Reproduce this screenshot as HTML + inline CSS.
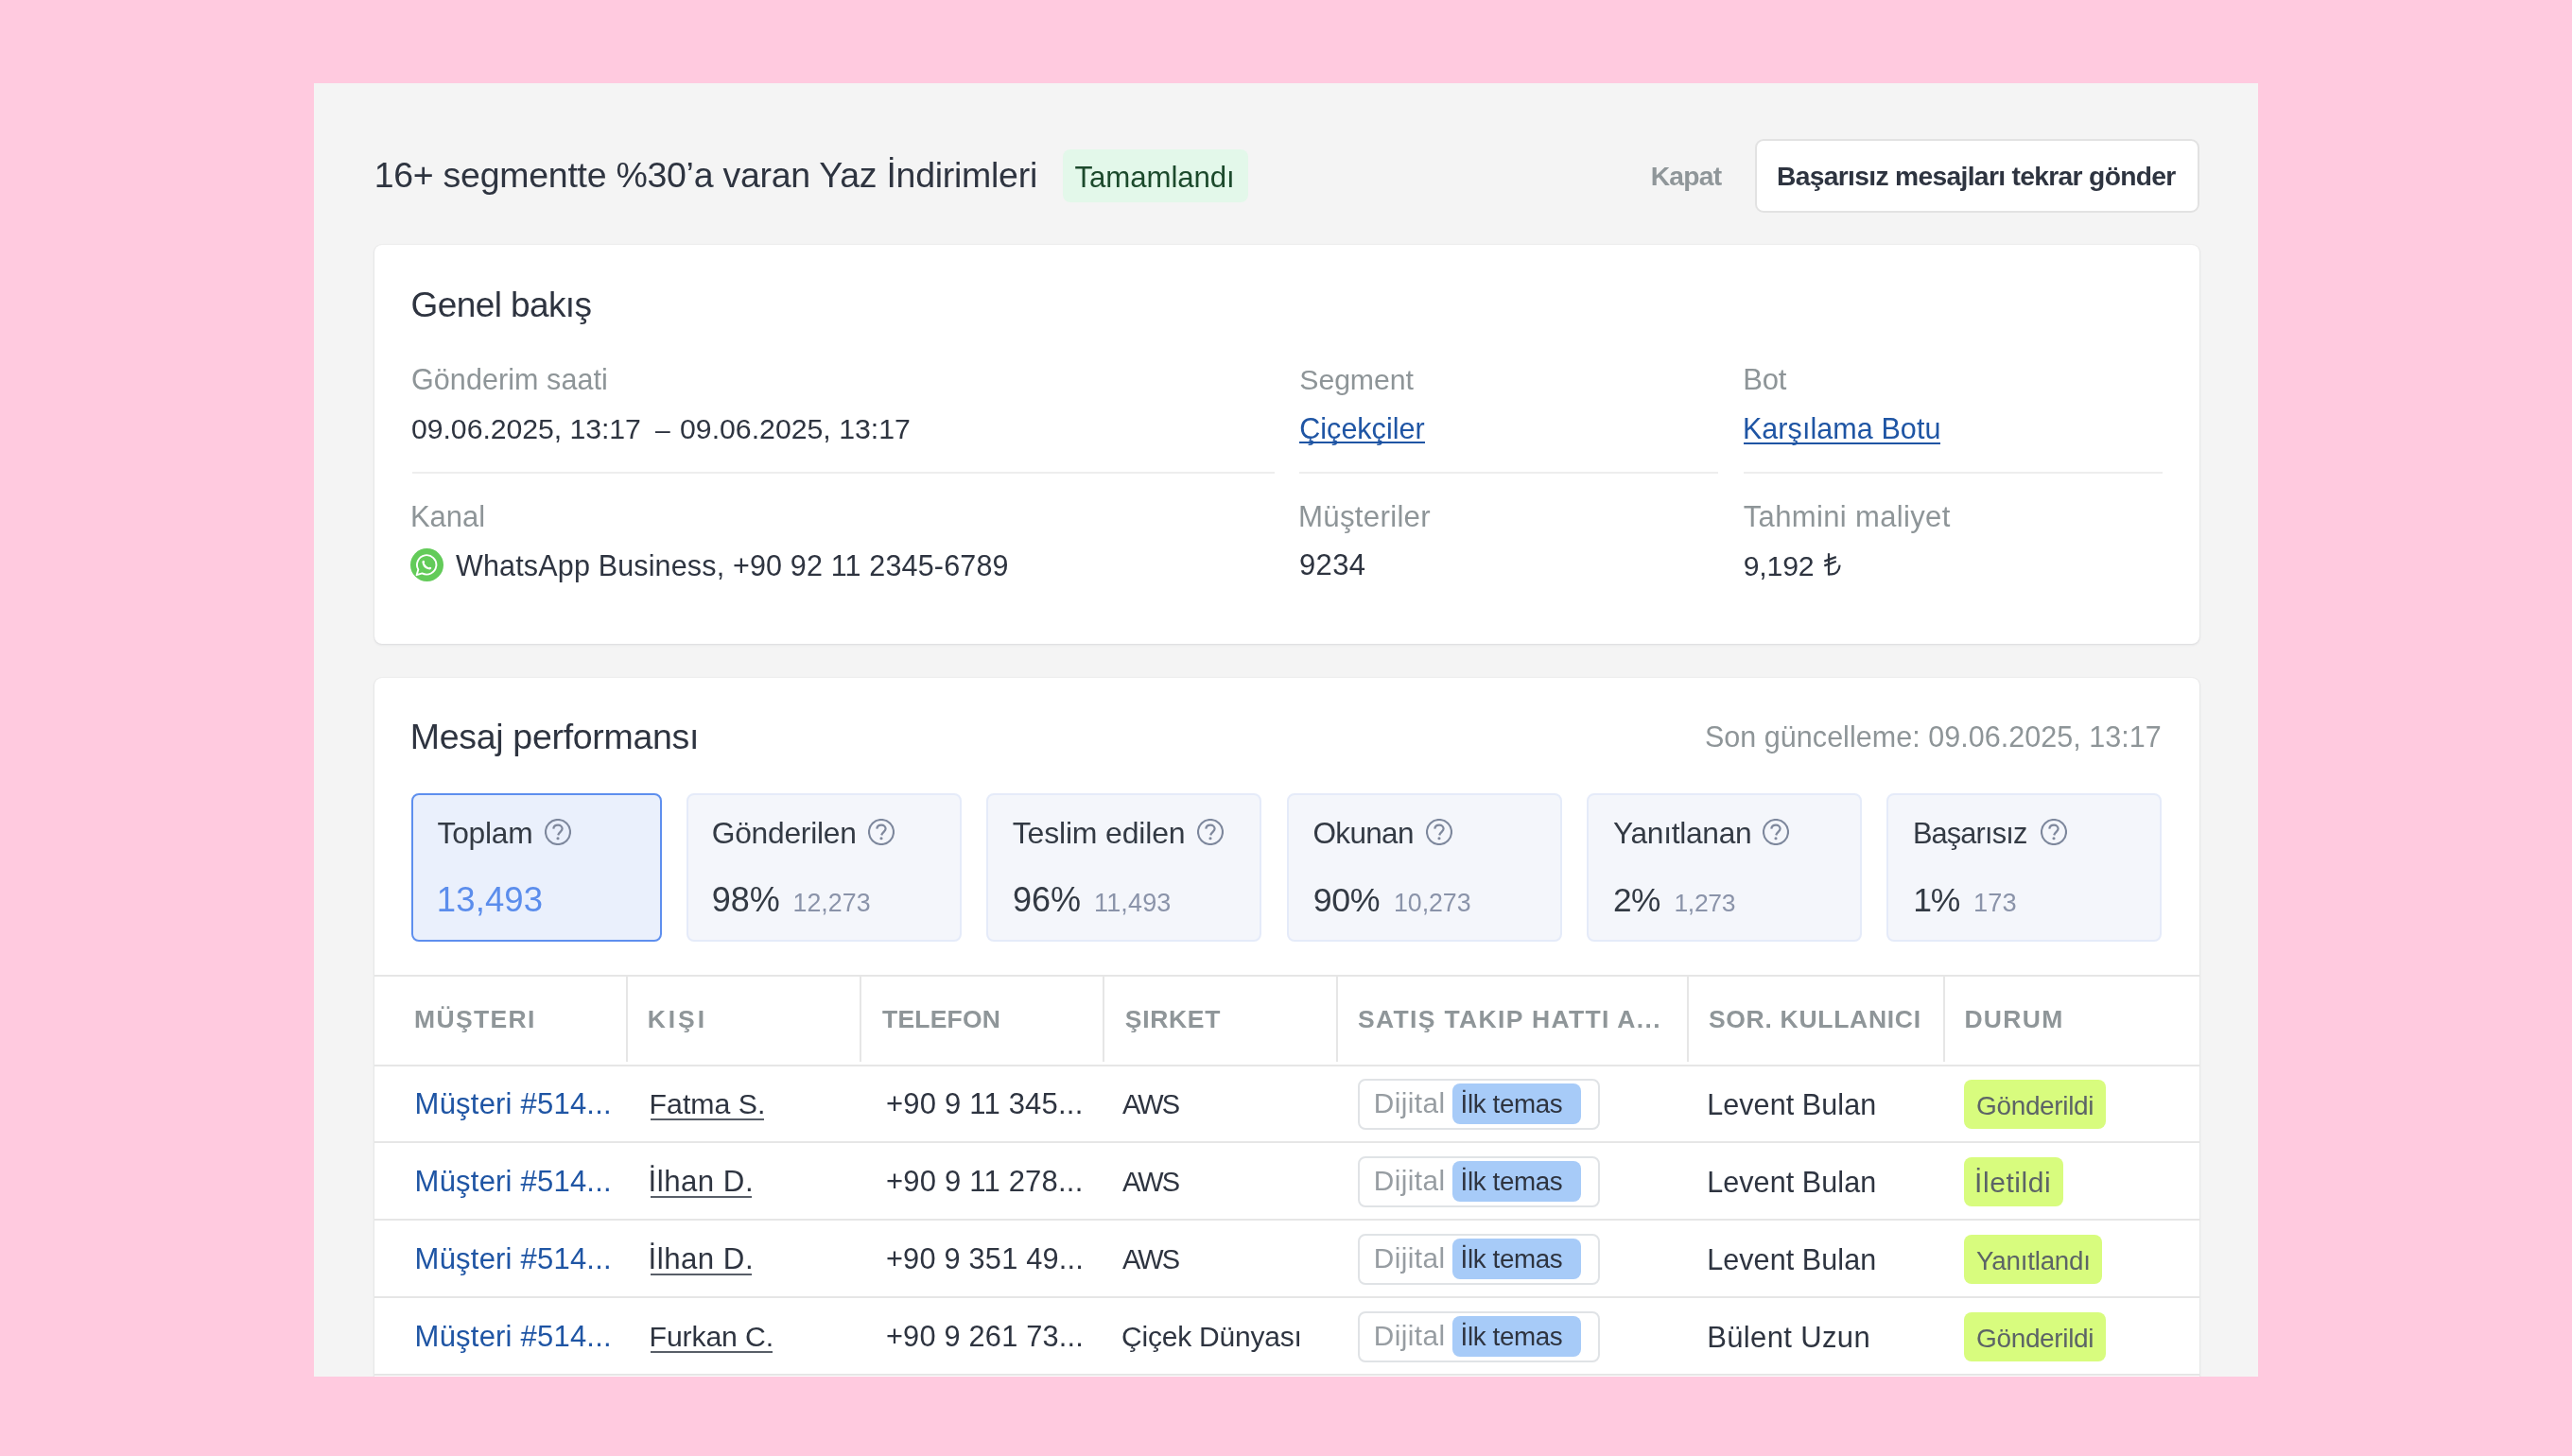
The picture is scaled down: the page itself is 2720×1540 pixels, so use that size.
<!DOCTYPE html>
<html><head><meta charset="utf-8"><title>Mesaj performansı</title>
<style>
html,body{margin:0;padding:0}
body{width:2720px;height:1540px;background:#FFCADF;position:relative;overflow:hidden;font-family:"Liberation Sans",sans-serif}
#panel{will-change:transform;position:absolute;left:332px;top:88px;width:2056px;height:1368px;background:#F4F4F4;overflow:hidden}
#panel>div,#panel>svg{position:absolute}
.t{white-space:nowrap;line-height:60px;height:60px}
</style></head><body>
<div id="panel">
<div style='left:792.00px;top:70.00px;width:196.00px;height:56.00px;background:#E3F8EA;border-radius:8px'></div>
<div style='left:1524.00px;top:59.00px;width:470.00px;height:78.00px;background:#fff;border:2px solid #E2E2E2;border-radius:9px;box-sizing:border-box'></div>
<div style='left:64.00px;top:171.00px;width:1930.00px;height:422.00px;background:#fff;border-radius:8px;box-shadow:0 1px 3px rgba(20,30,50,.11),0 0 2px rgba(0,0,0,.07)'></div>
<div style='left:104.00px;top:411.00px;width:912.00px;height:2.00px;background:#EEEEEE'></div>
<div style='left:1042.00px;top:411.00px;width:443.00px;height:2.00px;background:#EEEEEE'></div>
<div style='left:1512.00px;top:411.00px;width:443.00px;height:2.00px;background:#EEEEEE'></div>
<div style='left:1042.00px;top:379.00px;width:132.50px;height:2.00px;background:#1F55A4'></div>
<div style='left:1512.00px;top:379.50px;width:208.00px;height:2.00px;background:#1F55A4'></div>
<div style='left:64.00px;top:628.50px;width:1930.00px;height:843.50px;background:#fff;border-radius:8px;box-shadow:0 1px 3px rgba(20,30,50,.11),0 0 2px rgba(0,0,0,.07)'></div>
<div style='left:103.00px;top:751.00px;width:265.00px;height:157.00px;background:#EAF0FC;border:2px solid #5E8FEE;border-radius:8px;box-sizing:border-box'></div>
<div style='left:394.00px;top:751.00px;width:291.00px;height:157.00px;background:#F4F6FB;border:2px solid #E5EBF9;border-radius:8px;box-sizing:border-box'></div>
<div style='left:711.00px;top:751.00px;width:291.00px;height:157.00px;background:#F4F6FB;border:2px solid #E5EBF9;border-radius:8px;box-sizing:border-box'></div>
<div style='left:1029.00px;top:751.00px;width:291.00px;height:157.00px;background:#F4F6FB;border:2px solid #E5EBF9;border-radius:8px;box-sizing:border-box'></div>
<div style='left:1346.00px;top:751.00px;width:291.00px;height:157.00px;background:#F4F6FB;border:2px solid #E5EBF9;border-radius:8px;box-sizing:border-box'></div>
<div style='left:1663.00px;top:751.00px;width:291.00px;height:157.00px;background:#F4F6FB;border:2px solid #E5EBF9;border-radius:8px;box-sizing:border-box'></div>
<div style='left:64.00px;top:943.00px;width:1930.00px;height:2.00px;background:#E6E6E6'></div>
<div style='left:64.00px;top:1037.50px;width:1930.00px;height:2.00px;background:#E6E6E6'></div>
<div style='left:330.00px;top:944.00px;width:2.00px;height:91.00px;background:#E6E6E6'></div>
<div style='left:577.00px;top:944.00px;width:2.00px;height:91.00px;background:#E6E6E6'></div>
<div style='left:834.00px;top:944.00px;width:2.00px;height:91.00px;background:#E6E6E6'></div>
<div style='left:1081.00px;top:944.00px;width:2.00px;height:91.00px;background:#E6E6E6'></div>
<div style='left:1451.50px;top:944.00px;width:2.00px;height:91.00px;background:#E6E6E6'></div>
<div style='left:1723.00px;top:944.00px;width:2.00px;height:91.00px;background:#E6E6E6'></div>
<div style='left:64.00px;top:1119.00px;width:1930.00px;height:2.00px;background:#E6E6E6'></div>
<div style='left:64.00px;top:1201.00px;width:1930.00px;height:2.00px;background:#E6E6E6'></div>
<div style='left:64.00px;top:1283.00px;width:1930.00px;height:2.00px;background:#E6E6E6'></div>
<div style='left:64.00px;top:1365.00px;width:1930.00px;height:2.00px;background:#E6E6E6'></div>
<div style='left:356.00px;top:1094.50px;width:120.00px;height:2.00px;background:#585E68'></div>
<div style='left:1103.50px;top:1052.50px;width:256.00px;height:54.00px;background:#fff;border:2px solid #E0E3E6;border-radius:8px;box-sizing:border-box'></div>
<div style='left:1204.00px;top:1058.00px;width:136.00px;height:42.50px;background:#A7CBF8;border-radius:8px'></div>
<div style='left:1745.00px;top:1054.30px;width:150.00px;height:52.00px;background:#D8FC7E;border-radius:8px'></div>
<div style='left:356.00px;top:1176.50px;width:107.10px;height:2.00px;background:#585E68'></div>
<div style='left:1103.50px;top:1134.50px;width:256.00px;height:54.00px;background:#fff;border:2px solid #E0E3E6;border-radius:8px;box-sizing:border-box'></div>
<div style='left:1204.00px;top:1140.00px;width:136.00px;height:42.50px;background:#A7CBF8;border-radius:8px'></div>
<div style='left:1745.00px;top:1136.30px;width:105.00px;height:52.00px;background:#D8FC7E;border-radius:8px'></div>
<div style='left:356.00px;top:1258.50px;width:107.10px;height:2.00px;background:#585E68'></div>
<div style='left:1103.50px;top:1216.50px;width:256.00px;height:54.00px;background:#fff;border:2px solid #E0E3E6;border-radius:8px;box-sizing:border-box'></div>
<div style='left:1204.00px;top:1222.00px;width:136.00px;height:42.50px;background:#A7CBF8;border-radius:8px'></div>
<div style='left:1745.00px;top:1218.30px;width:146.00px;height:52.00px;background:#D8FC7E;border-radius:8px'></div>
<div style='left:356.00px;top:1340.50px;width:128.90px;height:2.00px;background:#585E68'></div>
<div style='left:1103.50px;top:1298.50px;width:256.00px;height:54.00px;background:#fff;border:2px solid #E0E3E6;border-radius:8px;box-sizing:border-box'></div>
<div style='left:1204.00px;top:1304.00px;width:136.00px;height:42.50px;background:#A7CBF8;border-radius:8px'></div>
<div style='left:1745.00px;top:1300.30px;width:150.00px;height:52.00px;background:#D8FC7E;border-radius:8px'></div>
<svg style='left:243.70px;top:778.00px' width='28' height='28' viewBox='0 0 28 28'><circle cx='14' cy='14' r='13' fill='none' stroke='#7D879C' stroke-width='2.15'/><path d='M9.3 10.6 C9.6 7.6 12 6.6 14.1 6.6 C16.6 6.6 18.6 8.3 18.6 10.6 C18.6 13.3 15.2 14.1 14.2 17.3' fill='none' stroke='#7F889C' stroke-width='2.2' stroke-linecap='butt'/><circle cx='14' cy='20.8' r='1.55' fill='#7F889C'/></svg>
<svg style='left:586.40px;top:778.00px' width='28' height='28' viewBox='0 0 28 28'><circle cx='14' cy='14' r='13' fill='none' stroke='#7D879C' stroke-width='2.15'/><path d='M9.3 10.6 C9.6 7.6 12 6.6 14.1 6.6 C16.6 6.6 18.6 8.3 18.6 10.6 C18.6 13.3 15.2 14.1 14.2 17.3' fill='none' stroke='#7F889C' stroke-width='2.2' stroke-linecap='butt'/><circle cx='14' cy='20.8' r='1.55' fill='#7F889C'/></svg>
<svg style='left:933.70px;top:778.00px' width='28' height='28' viewBox='0 0 28 28'><circle cx='14' cy='14' r='13' fill='none' stroke='#7D879C' stroke-width='2.15'/><path d='M9.3 10.6 C9.6 7.6 12 6.6 14.1 6.6 C16.6 6.6 18.6 8.3 18.6 10.6 C18.6 13.3 15.2 14.1 14.2 17.3' fill='none' stroke='#7F889C' stroke-width='2.2' stroke-linecap='butt'/><circle cx='14' cy='20.8' r='1.55' fill='#7F889C'/></svg>
<svg style='left:1176.00px;top:778.00px' width='28' height='28' viewBox='0 0 28 28'><circle cx='14' cy='14' r='13' fill='none' stroke='#7D879C' stroke-width='2.15'/><path d='M9.3 10.6 C9.6 7.6 12 6.6 14.1 6.6 C16.6 6.6 18.6 8.3 18.6 10.6 C18.6 13.3 15.2 14.1 14.2 17.3' fill='none' stroke='#7F889C' stroke-width='2.2' stroke-linecap='butt'/><circle cx='14' cy='20.8' r='1.55' fill='#7F889C'/></svg>
<svg style='left:1532.40px;top:778.00px' width='28' height='28' viewBox='0 0 28 28'><circle cx='14' cy='14' r='13' fill='none' stroke='#7D879C' stroke-width='2.15'/><path d='M9.3 10.6 C9.6 7.6 12 6.6 14.1 6.6 C16.6 6.6 18.6 8.3 18.6 10.6 C18.6 13.3 15.2 14.1 14.2 17.3' fill='none' stroke='#7F889C' stroke-width='2.2' stroke-linecap='butt'/><circle cx='14' cy='20.8' r='1.55' fill='#7F889C'/></svg>
<svg style='left:1826.40px;top:778.00px' width='28' height='28' viewBox='0 0 28 28'><circle cx='14' cy='14' r='13' fill='none' stroke='#7D879C' stroke-width='2.15'/><path d='M9.3 10.6 C9.6 7.6 12 6.6 14.1 6.6 C16.6 6.6 18.6 8.3 18.6 10.6 C18.6 13.3 15.2 14.1 14.2 17.3' fill='none' stroke='#7F889C' stroke-width='2.2' stroke-linecap='butt'/><circle cx='14' cy='20.8' r='1.55' fill='#7F889C'/></svg>
<svg style='left:102.20px;top:492.20px' width='35' height='35' viewBox='0 0 35 35'><circle cx='17.5' cy='17.5' r='17.5' fill='#63CB59'/><path d='M8.3 22.4 A10.2 10.2 0 1 1 12.4 26.4 L6.6 28.2 Z' fill='none' stroke='#fff' stroke-width='1.9' stroke-linejoin='round'/><path d='M12.4 14.6 Q12.3 12.7 13.9 12.7 Q15.2 12.8 15.1 14.5 L14.8 16.1 Q16.4 19.1 19.5 20.3 L20.5 19.7 Q22.4 19.8 22.3 21.1 Q22.0 22.4 20.3 22.4 Q13.4 21.6 12.4 14.6 Z' fill='#fff'/></svg>
<svg style='left:1596.00px;top:496.00px' width='22' height='26' viewBox='0 0 22 26'><g fill='none' stroke='#2E3440' stroke-width='2.2'><path d='M6 1.2 V24.5'/><path d='M6 23.4 H8.5 C13.8 23.4 17.2 19.6 17.6 13.6'/><path d='M1.3 9.6 L13.8 5.1'/><path d='M1.3 14.4 L13.8 9.8'/></g></svg>
<div class='t' style='left:63.70px;top:67.30px;font-size:37.5px;font-weight:400;color:#2E3440;letter-spacing:-0.275px'>16+ segmentte %30’a varan Yaz İndirimleri</div>
<div class='t' style='left:804.50px;top:69.50px;font-size:31.25px;font-weight:400;color:#1C4A2C;letter-spacing:-0.111px'>Tamamlandı</div>
<div class='t' style='left:1413.70px;top:67.60px;font-size:28.25px;font-weight:700;color:#8F9699;letter-spacing:-0.750px'>Kapat</div>
<div class='t' style='left:1547.00px;top:67.60px;font-size:28.25px;font-weight:700;color:#2E3440;letter-spacing:-0.688px'>Başarısız mesajları tekrar gönder</div>
<div class='t' style='left:102.60px;top:205.00px;font-size:37.0px;font-weight:400;color:#2E3440;letter-spacing:-0.600px'>Genel bakış</div>
<div class='t' style='left:103.00px;top:283.40px;font-size:30.5px;font-weight:400;color:#8E9598;letter-spacing:0.077px'>Gönderim saati</div>
<div class='t' style='left:1042.30px;top:284.40px;font-size:30.25px;font-weight:400;color:#8E9598;letter-spacing:-0.083px'>Segment</div>
<div class='t' style='left:1511.30px;top:284.40px;font-size:31.0px;font-weight:400;color:#8E9598;letter-spacing:-0.250px'>Bot</div>
<div class='t' style='left:103.00px;top:335.60px;font-size:30.25px;font-weight:400;color:#2E3440;letter-spacing:-0.062px'>09.06.2025, 13:17</div>
<div class='t' style='left:360.90px;top:335.60px;font-size:28.25px;font-weight:400;color:#2E3440;letter-spacing:-7.500px'>–</div>
<div class='t' style='left:387.00px;top:335.60px;font-size:30.25px;font-weight:400;color:#2E3440;letter-spacing:-0.006px'>09.06.2025, 13:17</div>
<div class='t' style='left:1042.30px;top:334.60px;font-size:30.5px;font-weight:400;color:#1F55A4;letter-spacing:0.011px'>Çiçekçiler</div>
<div class='t' style='left:1510.90px;top:335.00px;font-size:30.5px;font-weight:400;color:#1F55A4;letter-spacing:0.077px'>Karşılama Botu</div>
<div class='t' style='left:101.90px;top:429.20px;font-size:31.0px;font-weight:400;color:#8E9598;letter-spacing:0.000px'>Kanal</div>
<div class='t' style='left:1041.00px;top:429.40px;font-size:31.25px;font-weight:400;color:#8E9598;letter-spacing:0.278px'>Müşteriler</div>
<div class='t' style='left:1511.70px;top:429.40px;font-size:31.0px;font-weight:400;color:#8E9598;letter-spacing:0.357px'>Tahmini maliyet</div>
<div class='t' style='left:150.00px;top:479.60px;font-size:30.5px;font-weight:400;color:#2E3440;letter-spacing:0.162px'>WhatsApp Business, +90 92 11 2345-6789</div>
<div class='t' style='left:1042.00px;top:479.70px;font-size:31.0px;font-weight:400;color:#2E3440;letter-spacing:0.333px'>9234</div>
<div class='t' style='left:1511.70px;top:480.50px;font-size:30.25px;font-weight:400;color:#2E3440;letter-spacing:-0.200px'>9,192</div>
<div class='t' style='left:101.80px;top:660.50px;font-size:37.5px;font-weight:400;color:#2E3440;letter-spacing:-0.312px'>Mesaj performansı</div>
<div class='t' style='left:1471.00px;top:661.00px;font-size:30.5px;font-weight:400;color:#8E9598;letter-spacing:0.031px'>Son güncelleme: 09.06.2025, 13:17</div>
<div class='t' style='left:130.50px;top:762.70px;font-size:31.75px;font-weight:400;color:#333A44;letter-spacing:-0.220px'>Toplam</div>
<div class='t' style='left:420.70px;top:762.70px;font-size:31.75px;font-weight:400;color:#333A44;letter-spacing:-0.233px'>Gönderilen</div>
<div class='t' style='left:738.70px;top:762.70px;font-size:32.0px;font-weight:400;color:#333A44;letter-spacing:-0.175px'>Teslim edilen</div>
<div class='t' style='left:1056.50px;top:762.70px;font-size:31.5px;font-weight:400;color:#333A44;letter-spacing:-0.680px'>Okunan</div>
<div class='t' style='left:1374.00px;top:762.70px;font-size:31.75px;font-weight:400;color:#333A44;letter-spacing:-0.311px'>Yanıtlanan</div>
<div class='t' style='left:1690.90px;top:763.70px;font-size:30.75px;font-weight:400;color:#333A44;letter-spacing:-0.850px'>Başarısız</div>
<div class='t' style='left:129.80px;top:834.00px;font-size:36.5px;font-weight:400;color:#5B8DEC;letter-spacing:0.120px'>13,493</div>
<div class='t' style='left:420.70px;top:834.00px;font-size:36.0px;font-weight:400;color:#333A44;letter-spacing:-0.050px'>98%</div>
<div class='t' style='left:739.00px;top:834.00px;font-size:36.0px;font-weight:400;color:#333A44;letter-spacing:0.000px'>96%</div>
<div class='t' style='left:1056.80px;top:834.00px;font-size:35.75px;font-weight:400;color:#333A44;letter-spacing:-0.450px'>90%</div>
<div class='t' style='left:1374.10px;top:834.00px;font-size:35.25px;font-weight:400;color:#333A44;letter-spacing:-0.700px'>2%</div>
<div class='t' style='left:1691.20px;top:834.00px;font-size:35.5px;font-weight:400;color:#333A44;letter-spacing:-1.100px'>1%</div>
<div class='t' style='left:506.50px;top:837.00px;font-size:26.75px;font-weight:400;color:#8A93A9;letter-spacing:0.060px'>12,273</div>
<div class='t' style='left:825.00px;top:837.00px;font-size:27.0px;font-weight:400;color:#8A93A9;letter-spacing:0.160px'>11,493</div>
<div class='t' style='left:1142.00px;top:837.00px;font-size:26.75px;font-weight:400;color:#8A93A9;letter-spacing:-0.060px'>10,273</div>
<div class='t' style='left:1438.40px;top:837.00px;font-size:26.5px;font-weight:400;color:#8A93A9;letter-spacing:-0.300px'>1,273</div>
<div class='t' style='left:1754.90px;top:837.00px;font-size:27.25px;font-weight:400;color:#8A93A9;letter-spacing:0.150px'>173</div>
<div class='t' style='left:106.00px;top:960.20px;font-size:26.5px;font-weight:700;color:#8F9699;letter-spacing:1.333px'>MÜŞTERI</div>
<div class='t' style='left:352.70px;top:960.20px;font-size:26.5px;font-weight:700;color:#8F9699;letter-spacing:2.967px'>KIŞI</div>
<div class='t' style='left:601.00px;top:960.20px;font-size:26.5px;font-weight:700;color:#8F9699;letter-spacing:0.200px'>TELEFON</div>
<div class='t' style='left:857.80px;top:960.20px;font-size:26.5px;font-weight:700;color:#8F9699;letter-spacing:0.680px'>ŞIRKET</div>
<div class='t' style='left:1104.00px;top:960.20px;font-size:26.5px;font-weight:700;color:#8F9699;letter-spacing:1.338px'>SATIŞ TAKIP HATTI A...</div>
<div class='t' style='left:1474.90px;top:960.20px;font-size:26.5px;font-weight:700;color:#8F9699;letter-spacing:0.708px'>SOR. KULLANICI</div>
<div class='t' style='left:1745.40px;top:960.20px;font-size:26.5px;font-weight:700;color:#8F9699;letter-spacing:1.325px'>DURUM</div>
<div class='t' style='left:106.60px;top:1050.30px;font-size:31.0px;font-weight:400;color:#1F55A4;letter-spacing:0.214px'>Müşteri #514...</div>
<div class='t' style='left:354.60px;top:1050.30px;font-size:30.25px;font-weight:400;color:#2E3440;letter-spacing:0.000px'>Fatma S.</div>
<div class='t' style='left:604.90px;top:1050.30px;font-size:31.0px;font-weight:400;color:#2E3440;letter-spacing:0.214px'>+90 9 11 345...</div>
<div class='t' style='left:855.00px;top:1050.30px;font-size:29.0px;font-weight:400;color:#2E3440;letter-spacing:-2.000px'>AWS</div>
<div class='t' style='left:1120.80px;top:1048.80px;font-size:29.75px;font-weight:400;color:#979DA2;letter-spacing:0.433px'>Dijital</div>
<div class='t' style='left:1212.60px;top:1049.80px;font-size:27.75px;font-weight:400;color:#2E3440;letter-spacing:-0.375px'>İlk temas</div>
<div class='t' style='left:1473.20px;top:1050.20px;font-size:30.5px;font-weight:400;color:#2E3440;letter-spacing:0.082px'>Levent Bulan</div>
<div class='t' style='left:1758.00px;top:1051.70px;font-size:28.0px;font-weight:400;color:#5C6466;letter-spacing:-0.344px'>Gönderildi</div>
<div class='t' style='left:106.60px;top:1132.30px;font-size:31.0px;font-weight:400;color:#1F55A4;letter-spacing:0.214px'>Müşteri #514...</div>
<div class='t' style='left:353.60px;top:1132.30px;font-size:31.25px;font-weight:400;color:#2E3440;letter-spacing:0.471px'>İlhan D.</div>
<div class='t' style='left:604.90px;top:1132.30px;font-size:31.0px;font-weight:400;color:#2E3440;letter-spacing:0.214px'>+90 9 11 278...</div>
<div class='t' style='left:855.00px;top:1132.30px;font-size:29.0px;font-weight:400;color:#2E3440;letter-spacing:-2.000px'>AWS</div>
<div class='t' style='left:1120.80px;top:1130.80px;font-size:29.75px;font-weight:400;color:#979DA2;letter-spacing:0.433px'>Dijital</div>
<div class='t' style='left:1212.60px;top:1131.80px;font-size:27.75px;font-weight:400;color:#2E3440;letter-spacing:-0.375px'>İlk temas</div>
<div class='t' style='left:1473.20px;top:1132.20px;font-size:30.5px;font-weight:400;color:#2E3440;letter-spacing:0.082px'>Levent Bulan</div>
<div class='t' style='left:1756.00px;top:1132.70px;font-size:30.0px;font-weight:400;color:#5C6466;letter-spacing:0.571px'>İletildi</div>
<div class='t' style='left:106.60px;top:1214.30px;font-size:31.0px;font-weight:400;color:#1F55A4;letter-spacing:0.214px'>Müşteri #514...</div>
<div class='t' style='left:353.60px;top:1214.30px;font-size:31.25px;font-weight:400;color:#2E3440;letter-spacing:0.471px'>İlhan D.</div>
<div class='t' style='left:604.90px;top:1214.30px;font-size:30.75px;font-weight:400;color:#2E3440;letter-spacing:0.214px'>+90 9 351 49...</div>
<div class='t' style='left:855.00px;top:1214.30px;font-size:29.0px;font-weight:400;color:#2E3440;letter-spacing:-2.000px'>AWS</div>
<div class='t' style='left:1120.80px;top:1212.80px;font-size:29.75px;font-weight:400;color:#979DA2;letter-spacing:0.433px'>Dijital</div>
<div class='t' style='left:1212.60px;top:1213.80px;font-size:27.75px;font-weight:400;color:#2E3440;letter-spacing:-0.375px'>İlk temas</div>
<div class='t' style='left:1473.20px;top:1214.20px;font-size:30.5px;font-weight:400;color:#2E3440;letter-spacing:0.082px'>Levent Bulan</div>
<div class='t' style='left:1758.00px;top:1215.70px;font-size:27.75px;font-weight:400;color:#5C6466;letter-spacing:-0.211px'>Yanıtlandı</div>
<div class='t' style='left:106.60px;top:1296.30px;font-size:31.0px;font-weight:400;color:#1F55A4;letter-spacing:0.214px'>Müşteri #514...</div>
<div class='t' style='left:354.60px;top:1296.30px;font-size:30.25px;font-weight:400;color:#2E3440;letter-spacing:-0.162px'>Furkan C.</div>
<div class='t' style='left:604.90px;top:1296.30px;font-size:30.75px;font-weight:400;color:#2E3440;letter-spacing:0.214px'>+90 9 261 73...</div>
<div class='t' style='left:854.00px;top:1296.30px;font-size:30.0px;font-weight:400;color:#2E3440;letter-spacing:-0.208px'>Çiçek Dünyası</div>
<div class='t' style='left:1120.80px;top:1294.80px;font-size:29.75px;font-weight:400;color:#979DA2;letter-spacing:0.433px'>Dijital</div>
<div class='t' style='left:1212.60px;top:1295.80px;font-size:27.75px;font-weight:400;color:#2E3440;letter-spacing:-0.375px'>İlk temas</div>
<div class='t' style='left:1473.20px;top:1297.20px;font-size:31.0px;font-weight:400;color:#2E3440;letter-spacing:0.360px'>Bülent Uzun</div>
<div class='t' style='left:1758.00px;top:1297.70px;font-size:28.0px;font-weight:400;color:#5C6466;letter-spacing:-0.344px'>Gönderildi</div>
</div>
</body></html>
